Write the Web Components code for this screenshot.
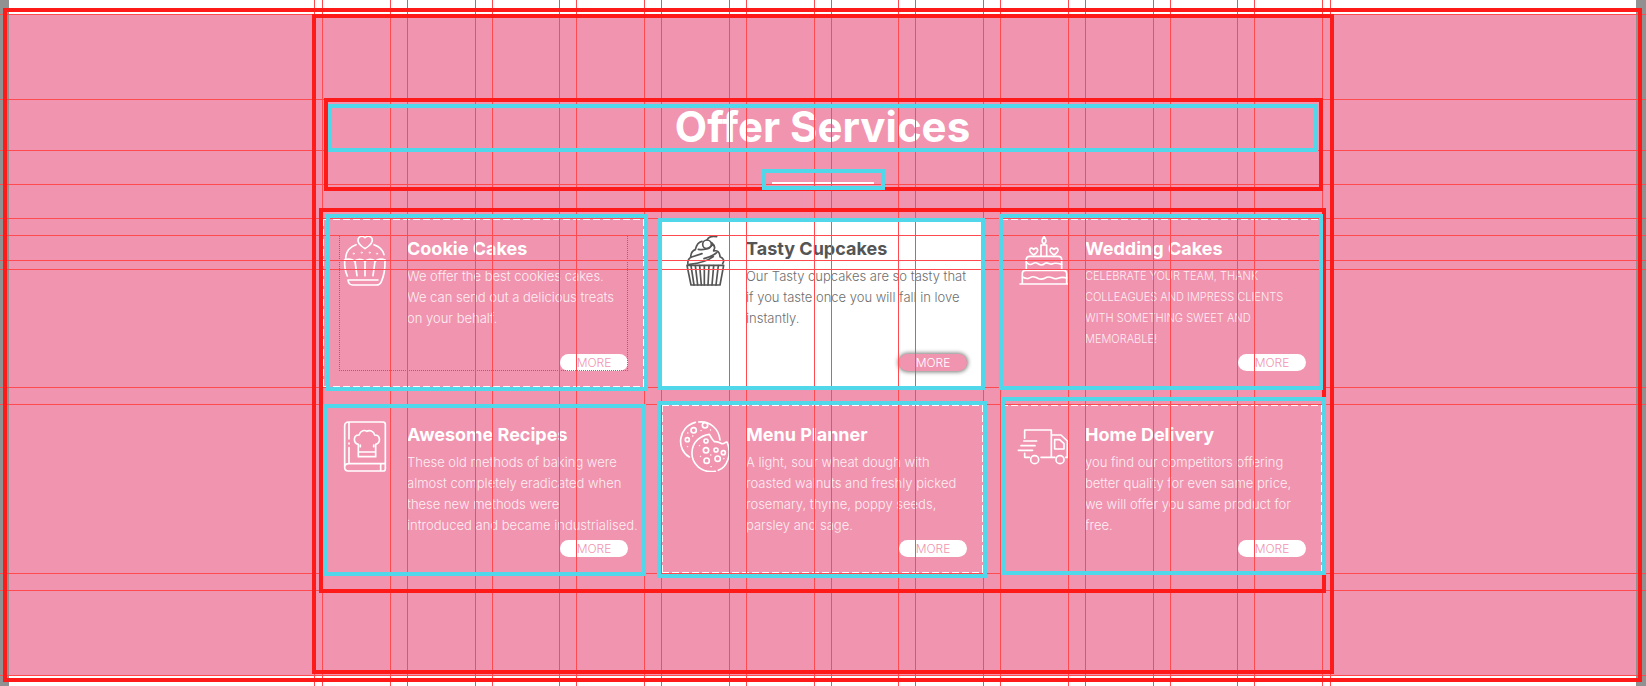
<!DOCTYPE html>
<html lang="en">
<head>
<meta charset="utf-8">
<title>Offer Services</title>
<style>
body { margin: 0; font-family: Inter, "Open Sans", sans-serif; background: #fff; }
</style>
</head>
<body>
<design-canvas>
  <offer-section>
    <section-heading slot="heading">Offer Services</section-heading>

    <service-card class="dash-all measured" style="--frame: -4px -3px -3px 4px">
      <svg slot="icon" viewBox="0 0 153 153" aria-hidden="true">
        <path d="M78 41C62 31 54 20 58 10C62 2 73 2 78 8C83 2 95 2 99 10C103 20 94 31 78 41Z"/>
        <path d="M20 72C20 52 32 36 51 29M105 29C122 35 132 44 135 59"/>
        <path d="M16 76Q31 68 47 78Q62 68 78 78Q94 68 109 78Q124 68 139 76"/>
        <path d="M17 76Q16 104 25 123M48 79L54 122M78 79V122M108 79L102 122M138 76Q139 116 126 142Q122 150 112 150H41Q29 150 27 135H117"/>
        <g stroke-width="2"><circle cx="44" cy="56" r="2"/><circle cx="68" cy="53" r="2"/><circle cx="92" cy="53" r="2"/><circle cx="114" cy="56" r="2"/></g>
      </svg>
      <span slot="title">Cookie Cakes</span>
      We offer the best cookies cakes.<br>We can send out a delicious treats<br>on your behalf.
    </service-card>

    <service-card class="active" style="--frame: 0 -1px -2px -3px">
      <svg slot="icon" viewBox="0 0 153 153" aria-hidden="true">
        <path d="M27 91H137L126 150H39Z"/>
        <path d="M39 92L48 150M52 92L59 150M65 92L70 150M79 92V150M93 92L90 150M107 92L102 150M121 92L114 150"/>
        <path d="M30 88Q27 72 41 66M38 66Q39 48 52 44Q57 22 72 19M101 23Q115 35 107 46M107 48Q124 44 126 64M126 65Q143 73 134 86M41 66L72 56M35 88Q82 83 106 65M61 43Q89 48 105 28M78 71Q105 63 116 53"/>
        <circle cx="87" cy="28" r="13"/>
        <path d="M87 15Q94 1 116 5"/>
      </svg>
      <span slot="title">Tasty Cupcakes</span>
      Our Tasty cupcakes are so tasty that<br>if you taste once you will fall in love<br>instantly.
    </service-card>

    <service-card class="dash-top caps" style="--frame: -4px 0 -2px -1px">
      <svg slot="icon" viewBox="0 0 153 153" aria-hidden="true">
        <path d="M81 5Q69 19 81 27Q93 19 81 5ZM72 63V30H89V63M28 102V73Q28 64 38 64H124Q134 64 134 73V102M16 146V116Q16 106 26 106H139Q149 106 149 116V146M9 147H152"/>
        <path d="M28 82C38 90 41 90 49 85S61 85 66 88S78 90 84 85S99 90 105 87S117 83 134 88M16 126C29 132 33 132 41 127S55 127 65 131S80 131 89 127S106 129 114 131S128 123 149 129"/>
        <path d="M50 60Q37 51 38 44Q41 35 50 43Q59 35 62 44Q63 51 50 60ZM111 60Q98 51 99 44Q102 35 111 43Q120 35 123 44Q124 51 111 60Z"/>
      </svg>
      <span slot="title">Wedding Cakes</span>
      CELEBRATE YOUR TEAM, THANK<br>COLLEAGUES AND IMPRESS CLIENTS<br>WITH SOMETHING SWEET AND<br>MEMORABLE!
    </service-card>

    <service-card style="--frame: 0 -1px -2px 1px">
      <svg slot="icon" viewBox="0 0 153 153" aria-hidden="true">
        <path d="M30 3H132Q139 3 139 10V143Q139 150 132 150H28Q17 150 17 139V14Q17 3 30 3ZM17 139Q17 128 30 128H139M30 3V54M30 66V69M30 80V127M125 128V150"/>
        <path d="M58 107V70C42 66 42 42 60 42C65 28 77 26 84 31C91 26 104 30 107 42C125 42 126 66 110 70V107ZM58 93H110M64 72V77M104 72V77"/>
      </svg>
      <span slot="title">Awesome Recipes</span>
      These old methods of baking were<br>almost completely eradicated when<br>these new methods were<br>introduced and became industrialised.
    </service-card>

    <service-card class="dash-all" style="--frame: -3px -3px -4px -4px">
      <svg slot="icon" viewBox="0 0 153 153" aria-hidden="true">
        <path d="M34 108C-7 84 1 17 52 4M62 3C97-1 123 25 126 57"/>
        <path d="M112 151C70 158 40 127 42 94C43 61 69 43 94 40C99 49 101 54 109 62C117 61 124 64 132 68C139 70 141 62 147 63C163 99 147 139 121 148"/>
        <circle cx="47" cy="28" r="8"/><circle cx="28" cy="56" r="6"/><circle cx="81" cy="13" r="8"/><circle cx="84" cy="60" r="6"/><circle cx="84" cy="88" r="8"/><circle cx="114" cy="87" r="6"/><circle cx="136" cy="95" r="6"/><circle cx="86" cy="119" r="8"/><circle cx="119" cy="113" r="8"/>
        <g stroke-width="2"><circle cx="29" cy="36" r="1"/><circle cx="44" cy="45" r="1"/><circle cx="28" cy="77" r="1"/><circle cx="69" cy="29" r="1"/><circle cx="64" cy="74" r="1"/><circle cx="67" cy="106" r="1"/><circle cx="98" cy="102" r="1"/><circle cx="137" cy="113" r="1"/><circle cx="99" cy="137" r="1"/><circle cx="97" cy="27" r="1"/></g>
      </svg>
      <span slot="title">Menu Planner</span>
      A light, sour wheat dough with<br>roasted walnuts and freshly picked<br>rosemary, thyme, poppy seeds,<br>parsley and sage.
    </service-card>

    <service-card class="dash-top-right" style="--frame: -7px -3px -1px 1px">
      <svg slot="icon" viewBox="0 0 153 153" aria-hidden="true">
        <path d="M23 52V27H103V109M103 42H132L151 60V109H146M37 109H23V97M72 109H114M20 60H59M12 74H54M4 88H47M113 56H128L141 68V84H113Z"/>
        <circle cx="53" cy="116" r="12"/><circle cx="129" cy="116" r="12"/>
      </svg>
      <span slot="title">Home Delivery</span>
      you find our competitors offering<br>better quality for even same price,<br>we will offer you same product for<br>free.
    </service-card>
  </offer-section>
</design-canvas>

<script>
function define(name, markup) {
  const template = document.createElement('template');
  template.innerHTML = markup;
  customElements.define(name, class extends HTMLElement {
    constructor() {
      super();
      this.attachShadow({ mode: 'open' }).append(template.content.cloneNode(true));
    }
  });
}

/* Coloured outline laid over the part it marks; --inset is its distance from that part. */
define('outline-frame', `
<style>
  :host { position: absolute; inset: var(--inset, 0); border: 4px solid var(--frame-color, #ff1a1a); z-index: 3; pointer-events: none; box-sizing: border-box; }
</style>`);

/* Twelve column guides and the row guides that cross the canvas. */
define('layout-guides', `
<style>
  :host { position: absolute; inset: 0; z-index: 2; pointer-events: none; overflow: hidden; --line: #ff4a50; }
  .columns { box-sizing: border-box; height: 100%; width: 1017px; max-width: 100%; margin: 0 auto; padding: 0 7px; border: solid var(--line); border-width: 0 1px;
    display: grid; grid-template-columns: repeat(12, 1fr); gap: 16px; }
  .columns i { border: solid var(--line); border-width: 0 1px; }
  .page { margin: 0 10px 0 9px; height: 100%; }
  hr { position: absolute; left: 0; right: 0; margin: 0; border: 0; height: 1px; background: var(--line); }
</style>
<div class="page"><div class="columns"><i></i><i></i><i></i><i></i><i></i><i></i><i></i><i></i><i></i><i></i><i></i><i></i></div></div>
<hr style="top:14px"><hr style="top:99px"><hr style="top:150px"><hr style="top:184px"><hr style="top:218px">
<hr style="top:235px"><hr style="top:260px"><hr style="top:269px">
<hr style="top:387px"><hr style="top:404px"><hr style="top:573px"><hr style="top:590px"><hr style="top:675px">`);

define('design-canvas', `
<style>
  :host { display: block; position: relative; box-sizing: border-box; min-height: 100vh; padding: 14px 0 10px; border: solid #919191; border-width: 0 10px 0 9px; background: #fff; }
  layout-guides { left: -9px; right: -10px; }
  outline-frame { --inset: 8px -6px 4px -6px; }
</style>
<slot></slot>
<layout-guides></layout-guides>
<outline-frame></outline-frame>`);

define('offer-section', `
<style>
  :host { display: block; background: #f194b0; }
  .container { position: relative; box-sizing: border-box; max-width: 1017px; margin: 0 auto; padding: 85px 8px 102px; }
  .grid { position: relative; display: grid; grid-template-columns: repeat(3, 1fr); gap: 16px; margin-top: 34px; }
  .outer { --inset: 0 -3px 2px -2px; }
  .cards { --inset: -10px -3px -19px -3px; }
</style>
<section class="container">
  <slot name="heading"></slot>
  <div class="grid"><outline-frame class="cards"></outline-frame><slot></slot></div>
  <outline-frame class="outer"></outline-frame>
</section>`);

define('section-heading', `
<style>
  :host { display: block; position: relative; text-align: center; color: #fff; }
  h2 { position: relative; margin: 0; font-size: 42px; font-weight: 700; line-height: 56px; height: 51px; }
  .rule { position: relative; width: 102px; height: 2px; margin: 32px auto 0; background: #fff; }
  .all { --inset: -1px 0 -7px 2px; }
  .title { --inset: 5px 5px -2px 6px; --frame-color: #50d7e9; }
  .mark { --inset: -13px -11px -6px -10px; --frame-color: #50d7e9; }
</style>
<outline-frame class="all"></outline-frame>
<h2><slot></slot><outline-frame class="title"></outline-frame></h2>
<div class="rule"><outline-frame class="mark"></outline-frame></div>`);

define('service-card', `
<style>
  :host { position: relative; box-sizing: border-box; display: grid; grid-template-columns: 51px 1fr; column-gap: 17px; min-height: 170px; padding: 17px; color: #fff; }
  :host(.active) { background: #fff; color: #555; }
  ::slotted(svg) { display: block; width: 51px; height: 51px; fill: none; stroke: currentColor; stroke-width: 5; stroke-linecap: round; stroke-linejoin: round; }
  .body { display: flex; flex-direction: column; min-width: 0; }
  h3 { margin: 0; font-size: 18px; font-weight: 700; line-height: 27px; }
  p { margin: 4px 0 0; font-size: 13px; font-weight: 300; line-height: 21px; white-space: nowrap; opacity: .85; height: 84px; }
  :host(.caps) p { font-size: 11px; }
  button { margin: 4px 0 0 auto; width: 68px; height: 17px; padding: 0; border: 0; border-radius: 9px; background: #fff; color: #f194b0; font: 300 12px/17px Inter, sans-serif; }
  :host(.active) button { background: #f194b0; color: #fff; box-shadow: 0 0 4px 1px #777; }
  .dashes { position: absolute; inset: 1px 1px 0 1px; display: none; --d: #fff 0 7px, transparent 7px 10px;
    --top: repeating-linear-gradient(90deg, var(--d)) 0 0 / 100% 1px no-repeat;
    --bottom: repeating-linear-gradient(90deg, var(--d)) 0 100% / 100% 1px no-repeat;
    --left: repeating-linear-gradient(180deg, var(--d)) 0 0 / 1px 100% no-repeat;
    --right: repeating-linear-gradient(180deg, var(--d)) 100% 0 / 1px 100% no-repeat; }
  :host(.dash-all) .dashes { display: block; inset: 1px; background: var(--top), var(--right), var(--bottom), var(--left); }
  :host(.dash-top) .dashes { display: block; background: var(--top); }
  :host(.dash-top-right) .dashes { display: block; background: var(--top), var(--right); }
  .measure { display: none; position: absolute; inset: 17px; border: 1px dotted #f0404c; border-top: 0; }
  :host(.measured) .measure { display: block; }
  outline-frame { --inset: var(--frame); --frame-color: #50d7e9; }
</style>
<div class="dashes"></div>
<slot name="icon"></slot>
<div class="body">
  <h3><slot name="title"></slot></h3>
  <p><slot></slot></p>
  <button type="button">MORE</button>
</div>
<div class="measure"></div>
<outline-frame></outline-frame>`);
</script>
</body>
</html>
